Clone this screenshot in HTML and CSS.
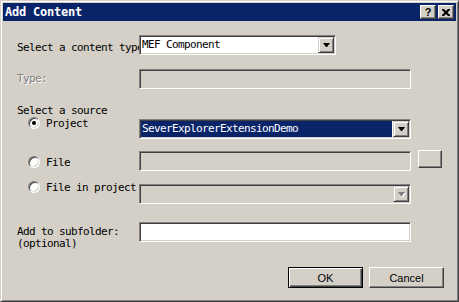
FILE: index.html
```html
<!DOCTYPE html>
<html lang="en">
<head>
    <meta charset="UTF-8">
    <meta name="viewport" content="width=device-width, initial-scale=1.0">
    <title>Add Content</title>
    <link rel="stylesheet" href="styles.css">
</head>
<body>
    <div class="window">
        <div class="titlebar">
            <span class="title">Add Content</span>
            <div class="caption-buttons">
                <span class="cap-btn cap-help">?</span>
                <span class="cap-btn cap-close">
                    <svg width="8" height="7" viewBox="0 0 8 7">
                        <path d="M0 0h2l2 2 2-2h2v1l-2.5 2.5L8 6v1H6L4 5 2 7H0V6l2.5-2.5L0 1z" fill="#000"/>
                    </svg>
                </span>
            </div>
        </div>
        <div class="content">
            <div class="row row-type">
                <span class="label label-low">Select a content type</span>
                <div class="combo combo-short">
                    <span class="combo-value">MEF Component</span>
                    <span class="drop-btn"><span class="arrow"></span></span>
                </div>
            </div>
            <div class="row row-typefield">
                <span class="label disabled">Type:</span>
                <div class="field field-disabled"></div>
            </div>
            <div class="section-label">Select a source</div>
            <div class="row radio-row row-project">
                <div class="radio-label rl-project">
                    <span class="radio checked"></span>
                    <span>Project</span>
                </div>
                <div class="combo">
                    <span class="combo-value selected">SeverExplorerExtensionDemo</span>
                    <span class="drop-btn"><span class="arrow"></span></span>
                </div>
            </div>
            <div class="row radio-row row-file">
                <div class="radio-label rl-file">
                    <span class="radio"></span>
                    <span>File</span>
                </div>
                <div class="field field-disabled"></div>
                <span class="browse-btn"></span>
            </div>
            <div class="row radio-row row-fip">
                <div class="radio-label rl-fip">
                    <span class="radio"></span>
                    <span>File in project</span>
                </div>
                <div class="combo combo-disabled">
                    <span class="combo-value"></span>
                    <span class="drop-btn"><span class="arrow"></span></span>
                </div>
            </div>
            <div class="row row-sub">
                <span class="label label-multi">Add to subfolder:<br>(optional)</span>
                <div class="field"></div>
            </div>
            <div class="actions">
                <button class="btn btn-default">OK</button>
                <button class="btn">Cancel</button>
            </div>
        </div>
    </div>
</body>
</html>
```

FILE: styles.css
```css
body {
    margin: 0;
    background: #d4d0c8;
    font-family: "DejaVu Sans Mono", "Liberation Mono", monospace;
    font-size: 11px;
    letter-spacing: -0.62px;
    color: #000;
}
.window {
    width: 459px;
    height: 302px;
    box-sizing: border-box;
    background: #d4d0c8;
    border: 1px solid;
    border-color: #d4d0c8 #404040 #404040 #d4d0c8;
    box-shadow: inset 1px 1px #fff, inset -1px -1px #808080;
    padding: 2px;
    display: flex;
    flex-direction: column;
}
.titlebar {
    height: 18px;
    flex-shrink: 0;
    background: #0a246a;
    display: flex;
    align-items: center;
    justify-content: space-between;
    padding: 0 2px;
}
.title {
    color: #fff;
    font-weight: bold;
    font-size: 12px;
    letter-spacing: -0.22px;
}
.caption-buttons {
    display: flex;
    gap: 2px;
}
.cap-btn {
    width: 16px;
    height: 14px;
    box-sizing: border-box;
    background: #d4d0c8;
    border: 1px solid;
    border-color: #fff #404040 #404040 #fff;
    box-shadow: inset -1px -1px #808080;
    display: flex;
    align-items: center;
    justify-content: center;
}
.cap-help {
    font-family: "Liberation Sans", Arial, sans-serif;
    font-weight: bold;
    font-size: 11px;
    letter-spacing: 0;
    line-height: 12px;
}
.content {
    flex: 1;
    padding: 0 12px 0 14px;
    display: flex;
    flex-direction: column;
}
.content > div {
    flex-shrink: 0;
}
.row {
    display: flex;
    align-items: center;
    height: 20px;
}
.row-type { margin-top: 14px; }
.row-typefield { margin-top: 14px; }
.row-project { margin-top: 1px; }
.row-file { margin-top: 12px; }
.row-fip { margin-top: 13px; }
.row-sub {
    margin-top: 18px;
    height: 28px;
    align-items: flex-start;
}
.label {
    width: 122px;
    flex-shrink: 0;
    white-space: nowrap;
    line-height: 12px;
}
.label-low { padding-top: 6px; }
.label-multi { margin-top: 4px; }
.disabled {
    color: #808080;
    text-shadow: 1px 1px #fff;
}
.section-label {
    margin-top: 15px;
    height: 14px;
    line-height: 14px;
}
.radio-row { align-items: flex-start; }
.radio-label {
    width: 122px;
    flex-shrink: 0;
    box-sizing: border-box;
    padding-left: 11px;
    display: flex;
    align-items: center;
    gap: 6px;
    height: 12px;
    white-space: nowrap;
}
.rl-project { margin-top: -2px; }
.rl-file { margin-top: 5px; }
.rl-fip { margin-top: -3px; }
.radio {
    width: 12px;
    height: 12px;
    box-sizing: border-box;
    border-radius: 50%;
    background: #fff;
    border: 1px solid;
    border-color: #808080 #fff #fff #808080;
    box-shadow: inset 1px 1px #404040, inset -1px -1px #d4d0c8;
    display: flex;
    align-items: center;
    justify-content: center;
    flex-shrink: 0;
}
.radio.checked::after {
    content: "";
    width: 4px;
    height: 4px;
    border-radius: 50%;
    background: #000;
}
.field, .combo {
    width: 272px;
    height: 20px;
    box-sizing: border-box;
    background: #fff;
    border: 1px solid;
    border-color: #808080 #fff #fff #808080;
    box-shadow: inset 1px 1px #404040, inset -1px -1px #d4d0c8;
    flex-shrink: 0;
}
.field-disabled { background: #d4d0c8; }
.combo {
    display: flex;
    padding: 1px;
}
.combo-short { width: 197px; }
.combo-disabled { background: #d4d0c8; }
.combo-value {
    flex: 1;
    line-height: 16px;
    padding-left: 1px;
    margin-right: 1px;
    white-space: nowrap;
    overflow: hidden;
}
.combo-value.selected {
    background: #0a246a;
    color: #fff;
}
.drop-btn {
    width: 16px;
    height: 16px;
    box-sizing: border-box;
    background: #d4d0c8;
    border: 1px solid;
    border-color: #d4d0c8 #404040 #404040 #d4d0c8;
    box-shadow: inset 1px 1px #fff, inset -1px -1px #808080;
    display: flex;
    align-items: center;
    justify-content: center;
}
.arrow {
    width: 1px;
    height: 0;
    border-left: 3px solid transparent;
    border-right: 3px solid transparent;
    border-top: 4px solid #000;
}
.combo-disabled .arrow {
    border-top-color: #808080;
    filter: drop-shadow(1px 1px 0 #fff);
}
.browse-btn {
    width: 24px;
    height: 18px;
    box-sizing: border-box;
    margin-left: 7px;
    margin-top: -1px;
    background: #d4d0c8;
    border: 1px solid;
    border-color: #fff #404040 #404040 #fff;
    box-shadow: inset -1px -1px #808080;
}
.actions {
    margin-top: 17px;
    display: flex;
    justify-content: flex-end;
    gap: 6px;
}
.btn {
    width: 75px;
    height: 21px;
    box-sizing: border-box;
    background: #d4d0c8;
    border: 1px solid;
    border-color: #fff #404040 #404040 #fff;
    box-shadow: inset -1px -1px #808080;
    font-family: "Liberation Sans", Arial, sans-serif;
    font-size: 11px;
    letter-spacing: 0;
    color: #000;
    padding: 0;
}
.btn-default {
    border-color: #000;
    box-shadow: inset 1px 1px #fff, inset -1px -1px #404040, inset -2px -2px #808080;
}
```
